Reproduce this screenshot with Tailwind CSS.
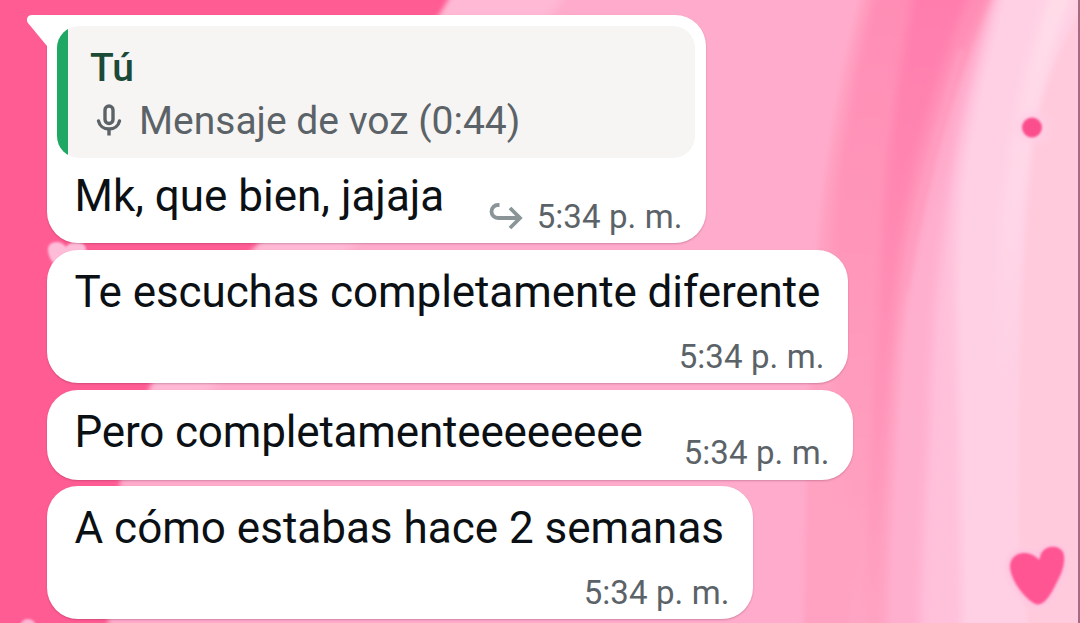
<!DOCTYPE html>
<html lang="es">
<head>
    <meta charset="UTF-8" />
    <meta name="viewport" content="width=device-width, initial-scale=1.0"/>
    <title>Chat</title>
    <script src="https://cdn.jsdelivr.net/npm/@tailwindcss/browser@4"></script>
</head>
<body class="bg-[#ffabcb] font-['Roboto',sans-serif] overflow-hidden">
    <div class="relative w-[1080px] h-[623px] overflow-hidden">

        <!-- Wallpaper -->
        <svg class="absolute inset-0" width="1080" height="623" viewBox="0 0 1080 623" fill="none" aria-hidden="true">
            <defs>
                <filter id="soft" x="-50%" y="-20%" width="200%" height="140%"><feGaussianBlur stdDeviation="5"/></filter>
                <filter id="edge" x="-20%" y="-20%" width="140%" height="140%"><feGaussianBlur stdDeviation="2.5"/></filter>
                <filter id="tiny" x="-20%" y="-20%" width="140%" height="140%"><feGaussianBlur stdDeviation="1.2"/></filter>
                <linearGradient id="band" gradientUnits="userSpaceOnUse" x1="0" y1="0" x2="0" y2="623">
                    <stop offset="0" stop-color="#ff8db5"/>
                    <stop offset=".35" stop-color="#ff95b9"/>
                    <stop offset=".65" stop-color="#ff9cbd"/>
                    <stop offset="1" stop-color="#ffa5c3"/>
                </linearGradient>
                <linearGradient id="streak" gradientUnits="userSpaceOnUse" x1="0" y1="0" x2="0" y2="623">
                    <stop offset="0" stop-color="#ff7dad"/>
                    <stop offset=".35" stop-color="#ff88b1"/>
                    <stop offset=".7" stop-color="#ff94b9"/>
                    <stop offset="1" stop-color="#ffa2c1"/>
                </linearGradient>
                <linearGradient id="shine" gradientUnits="userSpaceOnUse" x1="0" y1="0" x2="0" y2="400">
                    <stop offset="0" stop-color="#ffdbe8"/>
                    <stop offset=".6" stop-color="#ffd6e7"/>
                    <stop offset="1" stop-color="#ffd1e4" stop-opacity="0"/>
                </linearGradient>
            </defs>
            <rect width="1080" height="623" fill="#ffabcb"/>
            <path d="M440 -20H575C540 40 400 200 300 300L200 400H100Z" fill="#ffb9d4" filter="url(#soft)"/>
            <path d="M-20 -20H458C432 40 340 150 256 246C204 300 168 345 150 387C132 430 122 460 120 483C112 530 108 570 108 650H-20Z" fill="#ff5c93" filter="url(#edge)"/>
            <path d="M866 -20C838 80 824 180 818 250C812 340 806 420 804 660H890C890 540 900 400 905 330C915 220 945 110 1000 -20Z" fill="#ffa1c1" filter="url(#edge)"/>
            <path d="M876 -20C850 80 834 180 830 250C828 330 836 410 846 480L850 660H880C882 520 885 400 898 310C910 200 950 80 998 -20Z" fill="url(#band)" filter="url(#soft)"/>
            <path d="M916 -20C898 80 882 180 880 270C878 360 868 460 866 660H876C880 520 886 400 892 320C903 200 925 100 975 -20Z" fill="url(#streak)" filter="url(#soft)"/>
            <path d="M962 50C936 130 918 210 906 290" stroke="#ff9cc0" stroke-width="7" filter="url(#edge)"/>
            <path d="M945 170C926 230 905 290 900 380C896 460 886 560 886 660H950V300Z" fill="#ffafce" filter="url(#soft)"/>
            <path d="M1008 -40C985 30 962 100 950 180C942 240 934 300 930 400C928 470 920 550 920 660H1100V-40Z" fill="#ffc0da" filter="url(#soft)"/>
            <path d="M1010 -40C992 30 972 100 960 180C954 240 955 300 958 400L962 660H1100V-40Z" fill="#ffd0e4" filter="url(#soft)"/>
            <path d="M1066 -20C1040 50 1024 110 1012 220L1004 400" stroke="url(#shine)" stroke-width="22" filter="url(#soft)"/>
            <path d="M1080 10C1056 55 1040 95 1034 140C1022 240 1018 340 1018 530L1030 650H1100V0Z" fill="#ffcbdc" filter="url(#edge)"/>
            <circle cx="1032" cy="127.500" r="15" fill="#ffcfe6" filter="url(#soft)"/>
            <circle cx="1032" cy="127.500" r="10" fill="#fb4f8d" filter="url(#tiny)"/>
            <path d="M1039 560C1030 549 1010 551 1010 567C1011 581 1026 601 1037 604.500C1046 605 1052 592 1058 580C1063 571 1066 559 1063 552C1059 545 1047 545 1042 552C1040 555 1040 558 1039 560Z" fill="#ffc5e0" stroke="#ffc5e0" stroke-width="8" filter="url(#edge)"/>
            <path d="M1039 560C1030 549 1010 551 1010 567C1011 581 1026 601 1037 604.500C1046 605 1052 592 1058 580C1063 571 1066 559 1063 552C1059 545 1047 545 1042 552C1040 555 1040 558 1039 560Z" fill="#ff5593" filter="url(#tiny)"/>
            <path d="M66 247C60 239 47 241 48 251C49 260 56 267 66 274C76 268 86 258 86 249C85 240 71 240 66 247Z" fill="#ffbcd9" filter="url(#tiny)"/>
            <circle cx="28" cy="627" r="8" fill="#ffb5d5" filter="url(#tiny)"/>
            <rect x="1078" width="2" height="623" fill="#a66a84"/>
        </svg>

        <!-- Messages -->
        <main class="relative flex flex-col items-start pl-[46.5px] pt-[15px] text-[#0b1014]">

            <div class="relative w-[659px] h-[228px] mb-[7px] rounded-[31px] rounded-tl-none bg-white pl-[10.5px] pr-[11px] pt-[11px] pb-1.5 flex flex-col shadow-[0_1px_2px_rgba(80,20,50,0.25)]">
                <svg class="absolute -left-5 top-0" width="24" height="34" viewBox="0 0 24 34" fill="#fff">
                    <path d="M24 0H5C0.500 0 -1.500 4.500 1 8L20 31H24Z"/>
                </svg>
                <div class="flex h-[132px] shrink-0 rounded-[22px] bg-[#f6f5f3] overflow-hidden">
                    <div class="w-[11px] bg-[#1fa863]"></div>
                    <div class="pl-[22px] pt-[19px]">
                        <p class="text-[39px] leading-[46px] font-medium text-[#1b4a37]">Tú</p>
                        <p class="mt-[7px] flex items-center text-[39px] leading-[46px] text-[#5b6368] whitespace-nowrap">
                            <svg class="ml-1.5 mr-[17px] -mt-[3px]" width="26" height="34" viewBox="0 0 26 34" fill="none" stroke="#5b6368" stroke-width="3.400">
                                <rect x="9" y="3" width="8" height="17.500" rx="4"/>
                                <path d="M2.500 18C3.500 22.500 7.500 26 13 26S22.500 22.500 23.500 18" stroke-linecap="round"/>
                                <path d="M13 26V32.500"/>
                            </svg>
                            <span>Mensaje de voz (0:44)</span>
                        </p>
                    </div>
                </div>
                <div class="flex flex-1 justify-between pl-[17.5px] pr-3 pt-3">
                    <p class="text-[44px] leading-[52px] whitespace-nowrap">Mk, que bien, jajaja</p>
                    <div class="flex items-center self-end gap-3.5">
                        <svg class="-mt-[3px]" width="34" height="28" viewBox="0 0 34 28" fill="none" stroke="#8b9497" stroke-width="3.800">
                            <path d="M10.500 3H9A6.500 6.500 0 0 0 9 16H31M21 6L31 16L21 26"/>
                        </svg>
                        <span class="text-[33px] leading-10 tracking-[0.1px] text-[#5b6368] whitespace-nowrap">5:34 p. m.</span>
                    </div>
                </div>
            </div>

            <div class="w-[801px] h-[133px] mb-[7px] rounded-[31px] bg-white pl-7 pr-[23px] pt-4 pb-1.5 flex flex-col justify-between shadow-[0_1px_2px_rgba(80,20,50,0.25)]">
                <p class="text-[44px] leading-[52px] tracking-[-0.08px] whitespace-nowrap">Te escuchas completamente diferente</p>
                <span class="self-end text-[33px] leading-10 tracking-[0.1px] text-[#5b6368]">5:34 p. m.</span>
            </div>

            <div class="w-[806px] h-[90px] mb-1.5 rounded-[31px] bg-white pl-7 pr-[23px] pt-4 pb-[7px] flex justify-between shadow-[0_1px_2px_rgba(80,20,50,0.25)]">
                <p class="text-[44px] leading-[52px] tracking-[-0.17px] whitespace-nowrap">Pero completamenteeeeeeee</p>
                <span class="self-end text-[33px] leading-10 tracking-[0.1px] text-[#5b6368]">5:34 p. m.</span>
            </div>

            <div class="w-[706px] h-[133px] rounded-[31px] bg-white pl-7 pr-[23px] pt-4 pb-1.5 flex flex-col justify-between shadow-[0_1px_2px_rgba(80,20,50,0.25)]">
                <p class="text-[44px] leading-[52px] whitespace-nowrap">A cómo estabas hace 2 semanas</p>
                <span class="self-end text-[33px] leading-10 tracking-[0.1px] text-[#5b6368]">5:34 p. m.</span>
            </div>
        </main>
    </div>
</body>
</html>
